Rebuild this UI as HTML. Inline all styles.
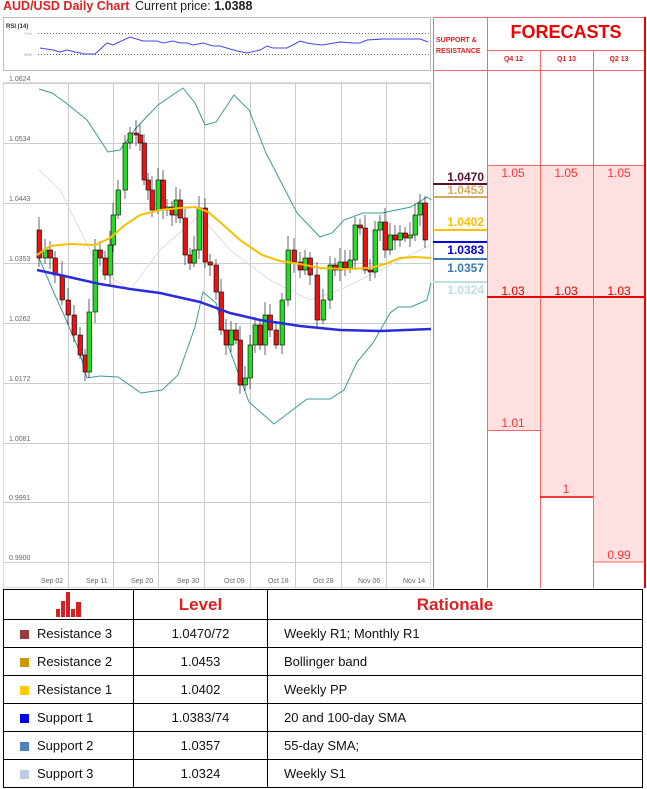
<!DOCTYPE html>
<html><head><meta charset="utf-8"><style>
body{margin:0;width:647px;height:789px;background:#fff;position:relative;overflow:hidden;font-family:"Liberation Sans",sans-serif}
.a{position:absolute}
.lbl{position:absolute;font-size:7px;color:#666;left:9px}
.xl{position:absolute;font-size:7px;color:#666;top:578px}
.sr{position:absolute;left:444px;font-size:12px;font-weight:bold;width:40px;text-align:right}
.fc{position:absolute;font-size:12px;color:#f33;text-align:center;width:52px}
table{border-collapse:collapse;position:absolute;left:3px;top:589px;width:640px}
td{border:1px solid #000;height:27px;padding:0;font-size:13px;color:#111}
.sw{display:inline-block;width:9px;height:9px;margin:0 8px 0 16px;vertical-align:-1px}
</style></head><body>
<div class="a" style="left:3px;top:-1px;font-size:12.5px;font-weight:bold;color:#e02020">AUD/USD Daily Chart</div>
<div class="a" style="left:135px;top:-1px;font-size:12.5px;color:#222">Current price: <b>1.0388</b></div>

<svg class="a" style="left:0;top:0" width="647" height="789">
<rect x="3.5" y="17.5" width="427" height="53" fill="#fff" stroke="#bbb"/>
<text x="6" y="28" font-size="6" font-weight="bold" fill="#333" font-family="Liberation Sans">RSI (14)</text>
<text x="24" y="35" font-size="4" fill="#999">70%</text><text x="24" y="56" font-size="4" fill="#999">30%</text>
<line x1="38" y1="33.5" x2="430" y2="33.5" stroke="#666" stroke-dasharray="1,2"/>
<line x1="38" y1="54.5" x2="430" y2="54.5" stroke="#666" stroke-dasharray="1,2"/>
<polyline fill="none" stroke="#4444ee" stroke-width="1" points="40,48 53,50 60,52 67,50 75,52 85,54 95,54 107,43 113,45 130,37 143,41 157,41 163,43 173,41 180,43 187,43 193,45 203,43 213,46 220,46 237,51 247,53 260,50 267,46 273,48 287,48 300,41 307,43 313,44 322,45 340,42 353,43 360,43 367,40 383,39 420,39 428,42"/>
<rect x="3.5" y="82.5" width="427" height="505" fill="#fff" stroke="#ddd"/>
<g stroke="#ccc" stroke-width="1">
<line x1="3" y1="83.5" x2="431" y2="83.5"/><line x1="3" y1="143.5" x2="431" y2="143.5"/><line x1="3" y1="203.5" x2="431" y2="203.5"/><line x1="3" y1="263.5" x2="431" y2="263.5"/><line x1="3" y1="323.5" x2="431" y2="323.5"/><line x1="3" y1="383.5" x2="431" y2="383.5"/><line x1="3" y1="443.5" x2="431" y2="443.5"/><line x1="3" y1="502.5" x2="431" y2="502.5"/><line x1="3" y1="562.5" x2="431" y2="562.5"/>
<line x1="68.5" y1="83" x2="68.5" y2="588"/><line x1="113.5" y1="83" x2="113.5" y2="588"/><line x1="158.5" y1="83" x2="158.5" y2="588"/><line x1="204.5" y1="83" x2="204.5" y2="588"/><line x1="250.5" y1="83" x2="250.5" y2="588"/><line x1="295.5" y1="83" x2="295.5" y2="588"/><line x1="341.5" y1="83" x2="341.5" y2="588"/><line x1="386.5" y1="83" x2="386.5" y2="588"/>
</g>
<polyline fill="none" stroke="#3a9a9a" stroke-width="1" points="39,89 52,93 66,103 87,120 108,152 120,150 137,127 158,105 183,88 195,103 205,125 216,122 234,95 249,110 266,153 297,213 320,237 332,233 344,220 363,213 382,213 411,207 427,197 431,200"/>
<polyline fill="none" stroke="#3a9a9a" stroke-width="1" points="39,258 54,293 64,315 79,350 87,378 100,376 118,377 141,393 162,390 178,375 195,327 203,292 216,303 226,340 249,402 274,424 295,408 307,399 330,399 344,390 357,362 373,343 390,313 398,307 411,307 427,300 431,283"/>
<polyline fill="none" stroke="#ddd" stroke-width="1" points="39,170 60,190 80,230 100,270 130,290 160,250 200,215 230,250 270,280 310,300 340,290 380,270 431,245"/>
<g id="c" stroke="#000" stroke-width="0.6"></g>
<polyline fill="none" stroke="#f5c000" stroke-width="2" points="37,255 50,246 70,244 95,245 110,238 125,225 140,215 160,210 180,208 195,207 208,212 220,222 240,240 262,255 280,261 300,264 320,268 345,269 370,268 385,264 400,258 415,257 431,258"/>
<polyline fill="none" stroke="#2b2bdd" stroke-width="2.5" points="37,270 60,275 100,284 130,289 160,293 200,302 230,313 260,320 300,326 340,330 380,331 431,329"/>
<rect x="487" y="165" width="53" height="265" fill="#ffe0e0"/>
<rect x="540" y="165" width="53" height="332" fill="#ffe0e0"/>
<rect x="593" y="165" width="52" height="397" fill="#ffe0e0"/>
<g stroke="#f66" stroke-width="1" fill="none">
<line x1="433.5" y1="17" x2="433.5" y2="588"/><line x1="487.5" y1="17" x2="487.5" y2="588"/><line x1="540.5" y1="50" x2="540.5" y2="588"/><line x1="593.5" y1="50" x2="593.5" y2="588"/>
<line x1="433" y1="17.5" x2="645" y2="17.5"/><line x1="487" y1="50.5" x2="645" y2="50.5"/><line x1="433" y1="70.5" x2="645" y2="70.5"/>
<line x1="487" y1="165.5" x2="645" y2="165.5"/><line x1="487" y1="430.5" x2="540" y2="430.5"/>
</g>
<line x1="645" y1="17" x2="645" y2="588" stroke="#e00" stroke-width="2"/>
<line x1="540" y1="497" x2="593" y2="497" stroke="#e00" stroke-width="1.5"/>
<line x1="593" y1="562" x2="645" y2="562" stroke="#f66" stroke-width="1"/>
<line x1="487" y1="297" x2="645" y2="297" stroke="#e00" stroke-width="2"/>
<line x1="433" y1="184" x2="487" y2="184" stroke="#5a1030" stroke-width="2"/>
<line x1="433" y1="197" x2="487" y2="197" stroke="#d4aa60" stroke-width="2"/>
<line x1="433" y1="230" x2="487" y2="230" stroke="#ffc000" stroke-width="2"/>
<line x1="433" y1="242" x2="487" y2="242" stroke="#0000ee" stroke-width="2"/>
<line x1="433" y1="259" x2="487" y2="259" stroke="#3a7ab0" stroke-width="2"/>
<line x1="433" y1="282" x2="487" y2="282" stroke="#bde0e0" stroke-width="2"/>
<g fill="#d42020"><rect x="56" y="609" width="4" height="8"/><rect x="61" y="601" width="4" height="16"/><rect x="66" y="592" width="4" height="25"/><rect x="71" y="609" width="4" height="8"/><rect x="76" y="602" width="5" height="15"/></g>
</svg>

<div class="lbl" style="top:76px">1.0624</div><div class="lbl" style="top:136px">1.0534</div><div class="lbl" style="top:196px">1.0443</div><div class="lbl" style="top:256px">1.0353</div><div class="lbl" style="top:316px">1.0262</div><div class="lbl" style="top:376px">1.0172</div><div class="lbl" style="top:436px">1.0081</div><div class="lbl" style="top:495px">0.9991</div><div class="lbl" style="top:555px">0.9900</div>
<div class="xl" style="left:41px">Sep 02</div><div class="xl" style="left:86px">Sep 11</div><div class="xl" style="left:131px">Sep 20</div><div class="xl" style="left:177px">Sep 30</div><div class="xl" style="left:224px">Oct 09</div><div class="xl" style="left:268px">Oct 18</div><div class="xl" style="left:313px">Oct 28</div><div class="xl" style="left:358px">Nov 06</div><div class="xl" style="left:403px">Nov 14</div>

<div class="a" style="left:436px;top:35px;font-size:7px;font-weight:bold;color:#e02020;line-height:11px">SUPPORT &amp;<br>RESISTANCE</div>
<div class="a" style="left:487px;top:22px;width:158px;text-align:center;font-size:18px;font-weight:bold;color:#e00">FORECASTS</div>
<div class="a" style="left:487px;top:56px;width:53px;text-align:center;font-size:7px;font-weight:bold;color:#e02020">Q4 12</div>
<div class="a" style="left:540px;top:56px;width:53px;text-align:center;font-size:7px;font-weight:bold;color:#e02020">Q1 13</div>
<div class="a" style="left:593px;top:56px;width:52px;text-align:center;font-size:7px;font-weight:bold;color:#e02020">Q2 13</div>
<div class="sr" style="top:170px;color:#5a1030">1.0470</div>
<div class="sr" style="top:183px;color:#d4aa60">1.0453</div>
<div class="sr" style="top:215px;color:#ffc000">1.0402</div>
<div class="sr" style="top:243px;color:#0000cc">1.0383</div>
<div class="sr" style="top:261px;color:#3a7ab0">1.0357</div>
<div class="sr" style="top:283px;color:#bde0e0">1.0324</div>
<div class="fc" style="left:487px;top:166px">1.05</div><div class="fc" style="left:540px;top:166px">1.05</div><div class="fc" style="left:593px;top:166px">1.05</div>
<div class="fc" style="left:487px;top:284px;color:#e00">1.03</div><div class="fc" style="left:540px;top:284px;color:#e00">1.03</div><div class="fc" style="left:593px;top:284px;color:#e00">1.03</div>
<div class="fc" style="left:487px;top:416px">1.01</div><div class="fc" style="left:540px;top:482px">1</div><div class="fc" style="left:593px;top:548px">0.99</div>

<table>
<tr><td style="width:129px;height:29px"></td><td style="width:133px;text-align:center;font-size:17px;font-weight:bold;color:#e02020">Level</td><td style="text-align:center;font-size:17px;font-weight:bold;color:#e02020">Rationale</td></tr>
<tr><td><span class="sw" style="background:#963c3c"></span>Resistance 3</td><td style="text-align:center">1.0470/72</td><td style="padding-left:16px">Weekly R1; Monthly R1</td></tr>
<tr><td><span class="sw" style="background:#cc9900"></span>Resistance 2</td><td style="text-align:center">1.0453</td><td style="padding-left:16px">Bollinger band</td></tr>
<tr><td><span class="sw" style="background:#ffcc00"></span>Resistance 1</td><td style="text-align:center">1.0402</td><td style="padding-left:16px">Weekly PP</td></tr>
<tr><td><span class="sw" style="background:#0000ee"></span>Support 1</td><td style="text-align:center">1.0383/74</td><td style="padding-left:16px">20 and 100-day SMA</td></tr>
<tr><td><span class="sw" style="background:#4f81bd"></span>Support 2</td><td style="text-align:center">1.0357</td><td style="padding-left:16px">55-day SMA;</td></tr>
<tr><td><span class="sw" style="background:#b9cde5"></span>Support 3</td><td style="text-align:center">1.0324</td><td style="padding-left:16px">Weekly S1</td></tr>
</table>
<script>
var d=[[34,230],[39,258],[45,250],[50,258],[55,275],[62,300],[68,315],[74,335],[80,355],[85,372],[89,312],[95,250],[100,258],[105,275],[110,245],[113,215],[118,190],[125,143],[130,133],[136,135],[140,143],[144,180],[148,190],[152,210],[158,180],[163,210],[167,207],[172,215],[176,200],[180,218],[185,255],[190,263],[194,250],[199,208],[205,262],[210,265],[216,292],[221,330],[226,345],[231,330],[236,340],[240,385],[245,378],[250,345],[255,325],[260,345],[265,315],[270,330],[276,345],[282,300],[288,250],[294,262],[300,270],[305,258],[310,275],[317,320],[323,300],[330,265],[335,270],[340,262],[345,268],[350,260],[355,225],[360,228],[365,270],[370,272],[375,230],[380,222],[385,250],[390,235],[395,240],[400,233],[405,238],[410,235],[415,215],[420,203],[425,240]];
var g=document.getElementById('c'),s='';
for(var i=1;i<d.length;i++){var x=d[i][0]-2,o=d[i-1][1],c=d[i][1],t=Math.min(o,c),b=Math.max(o,c);if(b-t<2)b=t+2;
s+='<line x1="'+(x+2)+'" y1="'+(t-6-(i*7%9))+'" x2="'+(x+2)+'" y2="'+(b+4+(i*5%8))+'"/>';
s+='<rect x="'+x+'" y="'+t+'" width="4.5" height="'+(b-t)+'" fill="'+(c>o?'#ee1111':'#22dd22')+'"/>';}
g.innerHTML=s;
</script>
</body></html>
